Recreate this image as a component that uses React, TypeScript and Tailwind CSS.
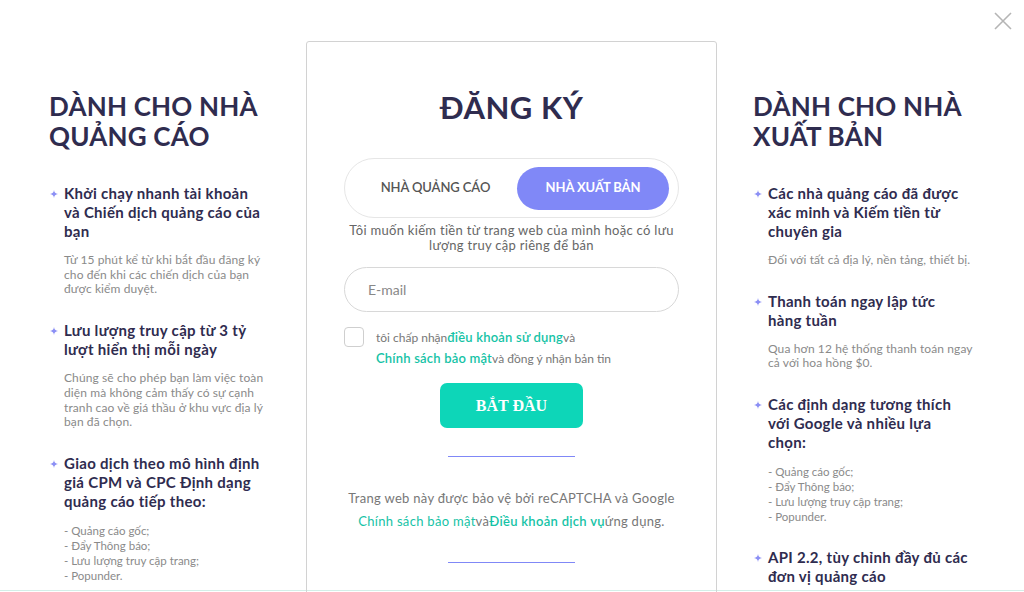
import React from "react";

const Star = () => (
  <svg width="8" height="8" viewBox="0 0 8 8" className="shrink-0">
    <path d="M4 0 C4.4 2.6 5.4 3.6 8 4 C5.4 4.4 4.4 5.4 4 8 C3.6 5.4 2.6 4.4 0 4 C2.6 3.6 3.6 2.6 4 0 Z" fill="#8b8ff5" />
  </svg>
);

type Item = { title: string[]; desc?: string[]; list?: string[] };

const Bullet = ({ item }: { item: Item }) => (
  <div className="flex">
    <div className="w-[15px] pt-[6px] pl-[1px]">
      <Star />
    </div>
    <div>
      <div className="text-[15px] leading-[19px] font-bold text-[#2f2c4f] tracking-[0.3px] whitespace-nowrap">
        {item.title.map((t, i) => (
          <div key={i}>{t}</div>
        ))}
      </div>
      {item.desc && (
        <div className="mt-[12px] text-[12px] leading-[14.7px] text-[#8a8a8a] tracking-[0.1px] whitespace-nowrap">
          {item.desc.map((t, i) => (
            <div key={i}>{t}</div>
          ))}
        </div>
      )}
      {item.list && (
        <div className="mt-[12px] text-[11.5px] leading-[15px] text-[#8a8a8a] whitespace-nowrap">
          {item.list.map((t, i) => (
            <div key={i}>{t}</div>
          ))}
        </div>
      )}
    </div>
  </div>
);

const leftItems: Item[] = [
  {
    title: ["Khởi chạy nhanh tài khoản", "và Chiến dịch quảng cáo của", "bạn"],
    desc: ["Từ 15 phút kể từ khi bắt đầu đăng ký", "cho đến khi các chiến dịch của bạn", "được kiểm duyệt."],
  },
  {
    title: ["Lưu lượng truy cập từ 3 tỷ", "lượt hiển thị mỗi ngày"],
    desc: [
      "Chúng sẽ cho phép bạn làm việc toàn",
      "diện mà không cảm thấy có sự cạnh",
      "tranh cao về giá thầu ở khu vực địa lý",
      "bạn đã chọn.",
    ],
  },
  {
    title: ["Giao dịch theo mô hình định", "giá CPM và CPC Định dạng", "quảng cáo tiếp theo:"],
    list: ["- Quảng cáo gốc;", "- Đẩy Thông báo;", "- Lưu lượng truy cập trang;", "- Popunder."],
  },
];

const rightItems: Item[] = [
  {
    title: ["Các nhà quảng cáo đã được", "xác minh và Kiếm tiền từ", "chuyên gia"],
    desc: ["Đối với tất cả địa lý, nền tảng, thiết bị."],
  },
  {
    title: ["Thanh toán ngay lập tức", "hàng tuần"],
    desc: ["Qua hơn 12 hệ thống thanh toán ngay", "cả với hoa hồng $0."],
  },
  {
    title: ["Các định dạng tương thích", "với Google và nhiều lựa", "chọn:"],
    list: ["- Quảng cáo gốc;", "- Đẩy Thông báo;", "- Lưu lượng truy cập trang;", "- Popunder."],
  },
  {
    title: ["API 2.2, tùy chỉnh đầy đủ các", "đơn vị quảng cáo"],
  },
];

const Heading = ({ lines }: { lines: string[] }) => (
  <h2 className="text-[26px] leading-[30px] font-bold text-[#2f2c4f] tracking-[0.2px] whitespace-nowrap">
    {lines.map((l, i) => (
      <div key={i}>{l}</div>
    ))}
  </h2>
);

export default function App() {
  return (
    <div
      className="relative w-[1024px] h-[592px] overflow-hidden bg-white"
      style={{ fontFamily: "Lato, 'Open Sans', sans-serif" }}
    >
      <div className="flex h-[591px] border-b border-[#d3eee8] pl-[49px]">
        {/* Left column */}
        <div className="w-[257px] pt-[91px] flex flex-col">
          <Heading lines={["DÀNH CHO NHÀ", "QUẢNG CÁO"]} />
          <div className="mt-[33px] flex flex-col gap-[24px]">
            {leftItems.map((it, i) => (
              <Bullet key={i} item={it} />
            ))}
          </div>
        </div>

        {/* Center card */}
        <div className="mt-[41px] w-[411px] h-[560px] border border-[#d2d2d2] rounded-[3px] flex flex-col items-center px-[37px]">
          <div className="mt-[46px] text-[31px] leading-[38px] font-bold text-[#2f2c4f] tracking-[0.5px]">ĐĂNG KÝ</div>
          <div className="mt-[32px] w-[335px] h-[60px] rounded-full border border-[#e6e6e6] flex items-center pl-[9px] pr-[9px]">
            <div className="flex-1 text-center text-[13px] font-semibold text-[#555] tracking-[-0.1px]">NHÀ QUẢNG CÁO</div>
            <div className="w-[152px] h-[43px] rounded-full bg-[#8088f7] flex items-center justify-center text-[13px] font-bold text-white tracking-[-0.1px]">
              NHÀ XUẤT BẢN
            </div>
          </div>
          <div className="mt-[5px] text-[13px] leading-[15px] text-[#666] text-center tracking-[0.3px] whitespace-nowrap">
            Tôi muốn kiếm tiền từ trang web của mình hoặc có lưu
            <br />
            lượng truy cập riêng để bán
          </div>
          <div className="mt-[14px] w-[335px] h-[45px] rounded-full border border-[#d8d8d8] flex items-center px-[23px] text-[14px] text-[#888]">
            E-mail
          </div>
          <div className="mt-[15px] w-[335px] flex">
            <div className="w-[20px] h-[20px] rounded-[4px] border border-[#cfcfcf] shrink-0" />
            <div className="ml-[12px] text-[12px] leading-[20px] text-[#777]">
              <div>
                tôi chấp nhận<span className="text-[13px] font-semibold text-[#16c3a6] tracking-[0.2px]">điều khoản sử dụng</span>và
              </div>
              <div>
                <span className="text-[13px] font-semibold text-[#16c3a6] tracking-[0.2px]">Chính sách bảo mật</span>và đồng ý nhận bản tin
              </div>
            </div>
          </div>
          <div
            className="mt-[14px] w-[143px] h-[45px] rounded-[7px] bg-[#0dd6b8] flex items-center justify-center text-white text-[16px] font-bold"
            style={{ fontFamily: "'Liberation Serif', serif" }}
          >
            BẮT ĐẦU
          </div>
          <div className="mt-[28px] w-[127px] h-px bg-[#8088f7]" />
          <div className="mt-[30px] text-[13px] leading-[23px] text-[#777] text-center tracking-[0.3px] whitespace-nowrap">
            <div>Trang web này được bảo vệ bởi reCAPTCHA và Google</div>
            <div>
              <span className="text-[#16c3a6]">Chính sách bảo mật</span>và
              <span className="text-[#16c3a6] font-semibold">Điều khoản dịch vụ</span>ứng dụng.
            </div>
          </div>
          <div className="mt-[29px] w-[127px] h-px bg-[#8088f7]" />
        </div>

        {/* Right column */}
        <div className="ml-[36px] w-[230px] pt-[91px] flex flex-col">
          <Heading lines={["DÀNH CHO NHÀ", "XUẤT BẢN"]} />
          <div className="mt-[33px] flex flex-col gap-[24px]">
            {rightItems.map((it, i) => (
              <Bullet key={i} item={it} />
            ))}
          </div>
        </div>
      </div>

      <button className="absolute right-[12px] top-[12px] w-[18px] h-[18px]" aria-label="close">
        <svg width="18" height="18" viewBox="0 0 18 18">
          <path d="M1 1 L17 17 M17 1 L1 17" stroke="#b5b5b5" strokeWidth="1.6" />
        </svg>
      </button>
    </div>
  );
}
